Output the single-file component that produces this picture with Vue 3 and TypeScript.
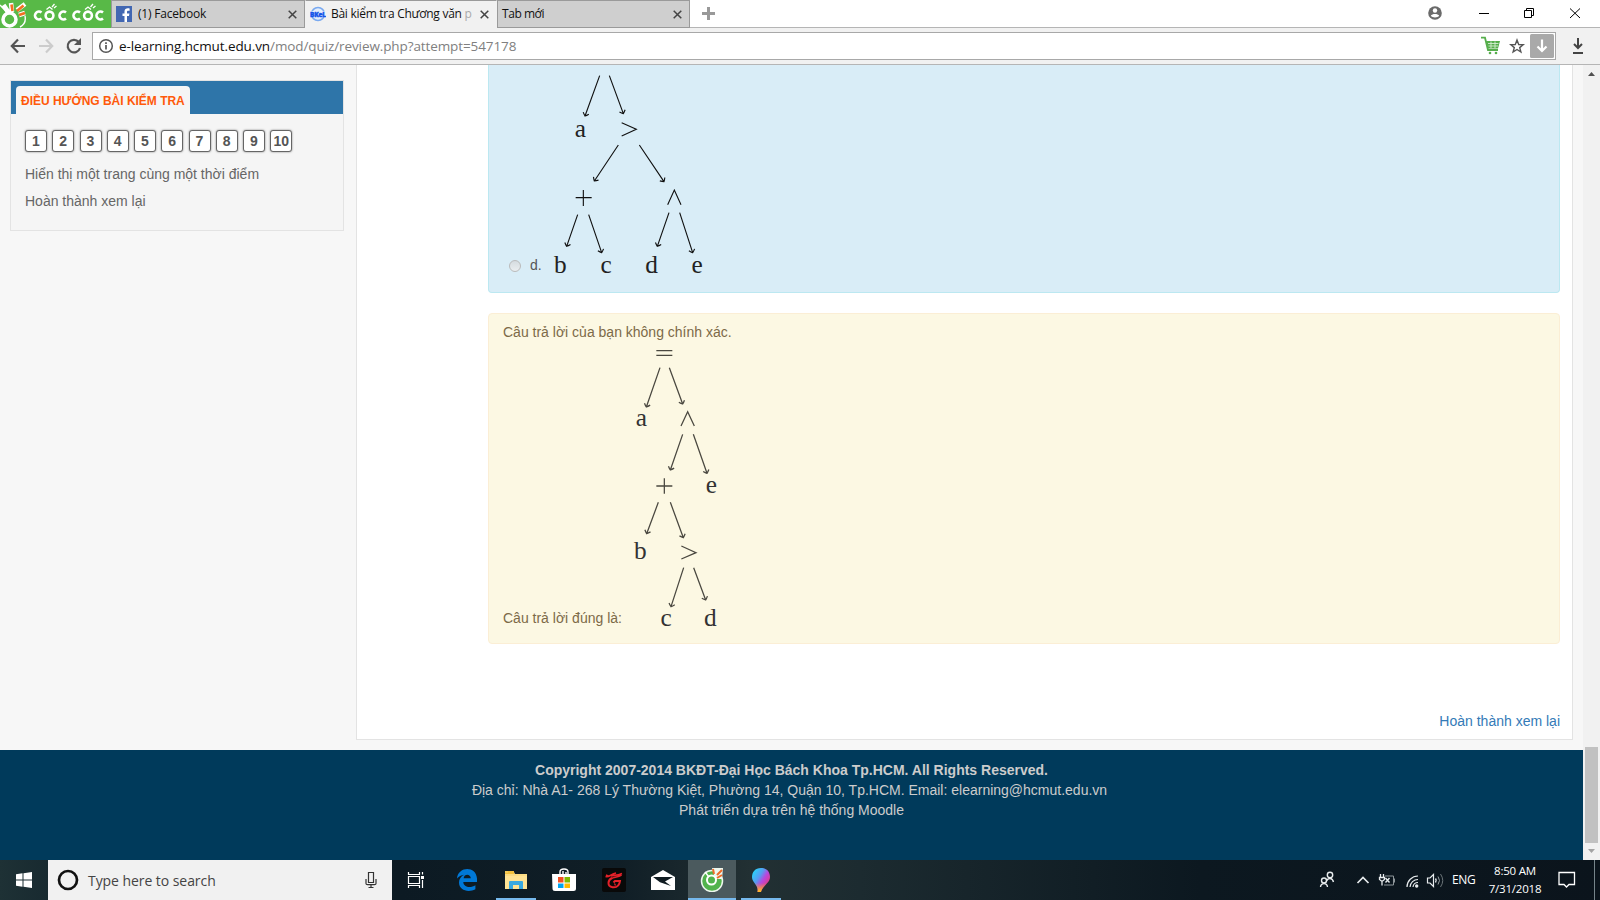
<script setup lang="ts">
type Arrow = [number, number, number, number]
interface Label { t: string; x: number; y: number }
interface Tree { box: string; w: number; h: number; arrows: Arrow[]; labels: Label[]; signs: string }

// Tree geometry is stored in thirds of a pixel.
const optionTree: Tree = {
  box: '210 15 480 645', w: 160, h: 215,
  arrows: [
    [359, 47, 315, 168], [388, 47, 430, 161], [415, 255, 343, 363], [478, 255, 552, 365],
    [293, 464, 260, 559], [326, 464, 365, 578], [567, 458, 532, 559], [599, 458, 638, 578],
  ],
  labels: [
    { t: 'a', x: 301, y: 230 }, { t: 'b', x: 241, y: 639 }, { t: 'c', x: 378, y: 639 },
    { t: 'd', x: 515, y: 639 }, { t: 'e', x: 651, y: 639 },
  ],
  signs: 'M425 188L469 208L425 228M287 413H335M310 390V438M563 434L583 390L603 434',
}
const answerTree: Tree = {
  box: '441 135 288 858', w: 96, h: 286,
  arrows: [
    [540, 203, 499, 321], [568, 203, 608, 312], [608, 403, 571, 510], [640, 403, 681, 520],
    [535, 607, 500, 701], [571, 607, 610, 713], [611, 803, 573, 920], [641, 803, 677, 900],
  ],
  labels: [
    { t: 'a', x: 484, y: 379 }, { t: 'e', x: 694, y: 579 }, { t: 'b', x: 481, y: 777 },
    { t: 'c', x: 558, y: 977 }, { t: 'd', x: 691, y: 977 },
  ],
  signs: 'M529 152H577M529 166H577M603 378L623 335L643 378M529 558H577M553 535V581M604 738L648 758L604 777',
}

function arrowPath([x1, y1, x2, y2]: Arrow): string {
  const a = Math.atan2(y2 - y1, x2 - x1)
  const pt = (back: number, side: number) =>
    `${(x2 - back * Math.cos(a) - side * Math.sin(a)).toFixed(1)} ${(y2 - back * Math.sin(a) + side * Math.cos(a)).toFixed(1)}`
  return `M${x1} ${y1}L${x2} ${y2}M${pt(9, 9)}Q${pt(3, 4)} ${x2} ${y2}Q${pt(3, -4)} ${pt(9, -9)}`
}
const pages = Array.from({ length: 10 }, (_, i) => i + 1)
</script>

<template>
  <div class="screen">
    <header class="tabs">
      <div class="brand">
        <svg width="111" height="28" viewBox="0 0 111 28">
          <path d="M0 5C3 8 5 10 7 13M20 27C24 25 26 21 25 16" stroke="#fff" stroke-width="1.4" fill="none" />
          <circle cx="9.500" cy="19.500" r="6.500" fill="none" stroke="#fff" stroke-width="3.500" />
          <path d="M3.500 5L9 13M11 3L12 12M17 10L25 4M19 15L25 13" stroke="#fff" stroke-width="4.500" />
          <path d="M11.500 4.500L12.500 11M17 11L23.500 5.500M19 15L25 13" stroke="#f37021" stroke-width="2.600" />
          <g fill="none" stroke="#fff" stroke-width="2.600">
            <path d="M41.500 12.400A4 4 0 1 0 41.500 18.600M66 12.400A4 4 0 1 0 66 18.600M80 12.400A4 4 0 1 0 80 18.600M103 12.400A4 4 0 1 0 103 18.600" />
            <circle cx="49.500" cy="15.500" r="3.900" /><circle cx="88" cy="15.500" r="3.900" />
          </g>
          <path d="M46.500 9.500L49.500 7L52.500 9.500M52 7L54.500 4M54 8L56.500 6M85 9.500L88 7L91 9.500M90.500 7L93 4M93 8L95.500 6" fill="none" stroke="#fff" stroke-width="1.300" />
        </svg>
      </div>
      <div class="tab">
        <svg width="16" height="16"><rect width="16" height="16" fill="#4267b2" /><path d="M11 16V10H13L13.400 7.600H11V6C11 5.200 11.300 4.700 12.400 4.700H13.600V2.500C11 2 8.500 2.500 8.500 5.500V7.600H6.500V10H8.500V16Z" fill="#fff" /></svg>
        <span class="t1">(1) Facebook</span>
        <svg class="x" width="9" height="9"><path d="M.7 .7L8.300 8.300M8.300 .7L.7 8.300" /></svg>
      </div>
      <div class="tab active">
        <svg width="16" height="16"><circle cx="8" cy="8" r="6.500" fill="#e4eefc" stroke="#79a9f0" stroke-width="1.500" /><rect y="5.200" width="16" height="5.800" fill="#e9f1fe" /><text x="0" y="10.500" textLength="16" lengthAdjust="spacingAndGlyphs" font-size="6.500" font-weight="900" fill="#1554e8" stroke="#1554e8" stroke-width=".4">BKeL</text></svg>
        <span class="t2">Bài kiểm tra Chương văn <i>p</i></span>
        <svg class="x" width="9" height="9"><path d="M.7 .7L8.300 8.300M8.300 .7L.7 8.300" /></svg>
      </div>
      <div class="tab third">
        <span class="t3">Tab mới</span>
        <svg class="x" width="9" height="9"><path d="M.7 .7L8.300 8.300M8.300 .7L.7 8.300" /></svg>
      </div>
      <svg class="plus" width="13" height="13"><path d="M6.500 0V13M0 6.500H13" stroke="#999" stroke-width="3" /></svg>
      <div class="grow"></div>
      <svg class="win" width="173" height="27" viewBox="0 0 173 27">
        <circle cx="8" cy="13" r="6.800" fill="#6a6a6a" /><circle cx="8" cy="10.500" r="2.200" fill="#fff" /><path d="M3.800 15.800C5 13.400 11 13.400 12.200 15.800C10.500 18 5.500 18 3.800 15.800Z" fill="#fff" />
        <g fill="none" stroke="#000"><path d="M52 13.500H62M97.500 10.500H104.500V17.500H97.500ZM99.500 10.500V8.500H106.500V15.500H104.500M143 8.500L153 18M153 8.500L143 18" /></g>
      </svg>
    </header>

    <div class="toolbar">
      <svg class="nav" width="92" height="36" viewBox="0 0 92 36">
        <path d="M25 18H12M18 11.500L11.800 18L18 24.500" fill="none" stroke="#555" stroke-width="2.200" />
        <path d="M39 18H52M46 11.500L52.200 18L46 24.500" fill="none" stroke="#ccc" stroke-width="2.200" />
        <path d="M78.800 14A6.300 6.300 0 1 0 80 20" fill="none" stroke="#555" stroke-width="2.200" /><path d="M81 10V17H74Z" fill="#555" />
      </svg>
      <div class="address">
        <svg width="16" height="16"><circle cx="8" cy="8" r="6.300" fill="none" stroke="#555" stroke-width="1.500" /><path d="M8 7V11.500M8 4.300V6" stroke="#555" stroke-width="1.700" /></svg>
        <span class="url"><b>e-learning.hcmut.edu.vn</b>/mod/quiz/review.php?attempt=547178</span>
        <span class="grow"></span>
        <svg width="74" height="26" viewBox="0 0 74 26">
          <path d="M0 4.700H4L7 17H17" fill="none" stroke="#56ae4c" stroke-width="1.800" /><path d="M5 8H19L17 15.500H7Z" fill="#56ae4c" /><path d="M7 10.500H17.500M7.500 13H17M10 8.500V15M14 8.500V15" stroke="#d5edd1" stroke-width=".9" /><circle cx="9" cy="20" r="1.300" fill="#56ae4c" /><circle cx="15" cy="20" r="1.300" fill="#56ae4c" />
          <path d="M36 7L37.700 11.500L42.200 11.700L38.700 14.600L39.900 19L36 16.500L32.100 19L33.300 14.600L29.800 11.700L34.300 11.500Z" fill="none" stroke="#555" stroke-width="1.400" />
          <rect x="49" y="1" width="24" height="24" rx="1.500" fill="#a9a9a9" /><path d="M61 6.500V18M56.500 13.500L61 18L65.500 13.500" fill="none" stroke="#fff" stroke-width="2.200" />
        </svg>
      </div>
      <svg class="dl" width="44" height="36"><path d="M22 10V20M18 16L22 20L26 16" fill="none" stroke="#444" stroke-width="2" /><path d="M17 25H27" stroke="#444" stroke-width="2" /></svg>
    </div>

    <div class="viewport">
      <div class="page">
        <div class="columns">
          <aside>
            <div class="block-head"><h2>ĐIỀU HƯỚNG BÀI KIỂM TRA</h2></div>
            <div class="block-body">
              <div class="pages"><button v-for="p in pages" :key="p">{{ p }}</button></div>
              <p>Hiển thị một trang cùng một thời điểm</p>
              <p>Hoàn thành xem lại</p>
            </div>
          </aside>
          <main>
            <section class="question">
              <i class="radio"></i><span class="letter">d.</span>
              <svg class="tree" :width="optionTree.w" :height="optionTree.h" :viewBox="optionTree.box">
                <path v-for="(a, i) in optionTree.arrows" :key="i" :d="arrowPath(a)" />
                <path :d="optionTree.signs" />
                <text v-for="l in optionTree.labels" :key="l.t" :x="l.x" :y="l.y">{{ l.t }}</text>
              </svg>
            </section>
            <section class="feedback">
              <p>Câu trả lời của bạn không chính xác.</p>
              <div class="right-answer">
                <span>Câu trả lời đúng là:</span>
                <svg class="tree soft" :width="answerTree.w" :height="answerTree.h" :viewBox="answerTree.box">
                  <path v-for="(a, i) in answerTree.arrows" :key="i" :d="arrowPath(a)" />
                  <path :d="answerTree.signs" />
                  <text v-for="l in answerTree.labels" :key="l.t" :x="l.x" :y="l.y">{{ l.t }}</text>
                </svg>
              </div>
            </section>
            <a class="finish">Hoàn thành xem lại</a>
          </main>
        </div>
        <footer>
          <strong>Copyright 2007-2014 BKĐT-Đại Học Bách Khoa Tp.HCM. All Rights Reserved.</strong>
          <span class="addr">Địa chỉ: Nhà A1- 268 Lý Thường Kiệt, Phường 14, Quận 10, Tp.HCM. Email: elearning@hcmut.edu.vn</span>
          <span>Phát triển dựa trên hệ thống Moodle</span>
        </footer>
      </div>
      <div class="scroll">
        <svg width="17" height="17"><path d="M5 11L8.500 7L12 11Z" fill="#505050" /></svg>
        <div class="thumb"></div>
        <svg width="17" height="17"><path d="M5 6L8.500 10L12 6Z" fill="#a3a3a3" /></svg>
      </div>
    </div>

    <div class="taskbar">
      <div class="cell start"><svg width="16" height="16"><path d="M0 2.200L6.500 1.300V7.500H0ZM7.500 1.200L16 0V7.500H7.500ZM0 8.500H6.500V14.700L0 13.800ZM7.500 8.500H16V16L7.500 14.800Z" fill="#fff" /></svg></div>
      <div class="search">
        <svg width="22" height="22"><circle cx="11" cy="11" r="9" fill="none" stroke="#111" stroke-width="2.700" /></svg>
        <span>Type here to search</span>
        <svg width="12" height="18"><path d="M3.500 1.500H8.500V11.500H3.500ZM1 8V12.500Q1 13.700 2.500 13.700H9.500Q11 13.700 11 12.500V8M6 14V16.500M3.500 16.500H8.500" fill="none" stroke="#333" stroke-width="1.200" /></svg>
      </div>
      <div class="cell"><svg width="18" height="18"><path d="M1.500 1V3.500H12.500V1M1.500 5.500H12.500V12.500H1.500ZM1.500 17V14.500H12.500V17M15.500 1V3.500M15.500 9V17" fill="none" stroke="#fff" stroke-width="1.200" /><rect x="14" y="5" width="3" height="3" fill="#fff" /></svg></div>
      <div class="cell edge"><svg width="22" height="22" viewBox="0 0 22 22"><path d="M1 9.500C2-2.500 20-3.500 21 9.500V13H7.300C7.500 18.600 14.800 19.300 19.400 16.300V20.300C12.500 24 3 21.500 3 13.600C3 10 5 7.200 8.200 5.700C5.200 6 2.500 7.500 1 9.500ZM7.600 9.200H14.800C14.600 4.700 8.200 4.400 7.600 9.200Z" fill="#0078d7" /></svg></div>
      <div class="cell explorer"><svg width="22" height="19"><path d="M0 1H9L10 3H22V18H0Z" fill="#ffe394" /><path d="M0 0H9V3H0Z" fill="#f3c13e" /><path d="M4 18V11Q4 10 5 10H17Q18 10 18 11V18H14V14H8V18Z" fill="#39a9e0" /><path d="M0 1H3M0 4H22" stroke="#f7d575" /></svg></div>
      <div class="cell"><svg width="24" height="24"><path d="M8 7V4Q8 1 12 1Q16 1 16 4V7M11 6V3M14 7V4" fill="none" stroke="#fff" stroke-width="1.400" /><path d="M0 6H24V20.500Q24 23 21.500 23H3Q.5 23 .5 20.500Z" fill="#fff" /><path d="M6 9H11.500V14.500H6Z" fill="#f25022" /><path d="M12.500 9H18V14.500H12.500Z" fill="#7fba00" /><path d="M6 15.500H11.500V20H6Z" fill="#00a4ef" /><path d="M12.500 15.500H18V20H12.500Z" fill="#ffb900" /></svg></div>
      <div class="cell garena"><svg width="24" height="24"><rect width="24" height="24" rx="2" fill="#090909" /><g fill="none" stroke="#e32129"><path d="M3.500 8.500C7 9.500 9 6 14 5M4 7L7 8.500M9 8C12 7 15 8 20 5.500M19.500 7C16 9.500 12 9 9.500 10.500" stroke-width="1.700" /><path d="M10 10C5.500 12 5 18.500 10.500 19.300C15 19.800 17.500 17 18 13H13L11.500 14.500" stroke-width="2" /><path d="M12.500 15.500L13.500 17.500" stroke-width="1.300" /></g></svg></div>
      <div class="cell mail"><svg width="24" height="20"><path d="M0 7L12 0L24 7V20H0Z" fill="#fff" /><path d="M2 7H22L14 11.500L20 16L9 12.200Z" fill="#101c22" /></svg></div>
      <div class="cell chosen"><svg width="24" height="24"><circle cx="12" cy="13" r="10.500" fill="#52b34c" stroke="#eef7ee" stroke-width="1.500" /><path d="M12 0H23L22 11H15Z" fill="#eef7ee" /><circle cx="11.500" cy="12" r="4.500" fill="#52b34c" stroke="#fff" stroke-width="2" /><path d="M13 1L14 6M22 2L17 7M22 7L17 10" stroke="#ef6b28" stroke-width="2" /><path d="M5 4L9 9" stroke="#fff" stroke-width="1.500" /></svg></div>
      <div class="cell paint">
        <svg width="20" height="24">
          <defs><linearGradient id="drop" x1=".15" y1=".15" x2=".85" y2=".75"><stop offset="0" stop-color="#31c9f6" /><stop offset=".36" stop-color="#589af1" /><stop offset=".62" stop-color="#b747df" /><stop offset="1" stop-color="#e33a84" /></linearGradient><linearGradient id="tip" x1="0" y1="0" x2="0" y2="1"><stop offset=".62" stop-color="#f6a323" stop-opacity="0" /><stop offset=".95" stop-color="#ffb52b" /></linearGradient></defs>
          <path d="M10 0C16 0 19 4 19 9C19 15 12 17 10 24H6.500C8 17 1 15 1 9C1 4 4 0 10 0Z" fill="url(#drop)" /><path d="M10 0C16 0 19 4 19 9C19 15 12 17 10 24H6.500C8 17 1 15 1 9C1 4 4 0 10 0Z" fill="url(#tip)" />
        </svg>
      </div>
      <div class="grow"></div>
      <svg class="tray" width="130" height="40" viewBox="1315 0 130 40">
        <g fill="none" stroke="#e8ecee" stroke-width="1.400">
          <circle cx="1330" cy="15" r="2.700" /><path d="M1326.500 21C1328 17.500 1332.500 17.500 1333.500 22" /><circle cx="1324" cy="20.500" r="2.500" /><path d="M1320.500 27C1321 22.500 1327 22.500 1327.500 27" />
          <path d="M1357.500 23L1363 17.500L1368.500 23" stroke-width="1.700" />
          <path d="M1380.500 14V17M1383.500 14V17M1379.500 17.500H1384.500V19.500L1382 21.500L1379.500 19.500ZM1382 21V25.500" stroke-width="1.300" />
          <path d="M1385 16H1393.500V25H1384M1394.500 18.500V22.500" stroke="#8d9599" stroke-width="1" /><path d="M1385.500 18L1389.500 22.500M1389.500 18L1385.500 22.500" />
          <path d="M1407 27A11 11 0 0 1 1418 16M1410 27A8 8 0 0 1 1418 19.500M1413 27A5 5 0 0 1 1418 22.500" stroke-width="1.200" /><circle cx="1416.700" cy="26" r="1" fill="#fff" />
          <path d="M1427.500 18H1430L1433.500 14.500V26.500L1430 23H1427.500Z" stroke-width="1.200" /><path d="M1435.500 18.500Q1437 20.500 1435.500 22.500" /><path d="M1438 16.500Q1441 20.500 1438 24.500" stroke="#9aa1a4" stroke-width="1" /><path d="M1440.500 14Q1445 20.500 1440.500 27" stroke="#6c7579" stroke-width="1" />
        </g>
      </svg>
      <span class="lang">ENG</span>
      <div class="clock"><span>8:50 AM</span><span>7/31/2018</span></div>
      <svg class="notes" width="18" height="18"><path d="M1 1.500H16.500V13.500H11L8.500 16L6 13.500H1Z" fill="none" stroke="#fff" stroke-width="1.300" /></svg>
      <div class="peek"></div>
    </div>
  </div>
</template>

<style>
body { margin: 0; }
</style>
<style scoped>
* { box-sizing: border-box; }
svg { display: block; flex: none; }
p, h2 { margin: 0; }
.grow { flex: 1; }
.screen { width: 1600px; height: 900px; overflow: hidden; display: flex; flex-direction: column; background: #fff; font-family: "Liberation Sans", sans-serif; font-size: 14px; white-space: nowrap; }
.tabs { height: 28px; display: flex; background: #fff; border-bottom: 1px solid #b5b5b5; font: 12px "Open Sans", "Noto Sans", sans-serif; color: #111; flex: none; }
.brand { width: 111px; height: 28px; background: #58b947; overflow: hidden; }
.tab { width: 194px; height: 28px; border: 1px solid #9a9a9a; background: #cfcfcf; display: flex; align-items: center; padding: 0 7px 0 4px; flex: none; letter-spacing: -.2px; }
.tab > span { flex: 1; margin-left: 6px; margin-top: -1px; }
.tab.active { width: 192px; background: #f1f1f1; border-color: #f1f1f1; border-top-color: #9a9a9a; }
.tab .t2 { margin-left: 5px; letter-spacing: -.28px; }
.t2 i { font-style: normal; color: #aaa; }
.tab.third { width: 193px; }
.tab .t3 { margin-left: 0; letter-spacing: -.45px; }
.x { fill: none; stroke: #444; stroke-width: 1.5; }
.plus { margin: 7px 0 0 12px; }
.toolbar { height: 37px; flex: none; background: #f1f1f1; border-bottom: 1px solid #b5b5b5; display: flex; }
.address { width: 1464px; height: 28px; margin-top: 4px; border: 1px solid #a8a8a8; background: #fff; display: flex; align-items: center; padding-left: 5px; }
.url { margin-left: 5px; font: 13.5px "Open Sans", "Noto Sans", sans-serif; letter-spacing: -.1px; color: #808080; }
.url b { font-weight: 400; color: #111; }
.viewport { height: 795px; display: flex; flex: none; }
.page { width: 1583px; background: #f7f7f7; display: flex; flex-direction: column; }
.columns { height: 685px; display: flex; align-items: flex-start; }
aside { width: 334px; height: 151px; margin: 15px 12px 0 10px; border: 1px solid #e3e3e3; background: #f5f5f5; flex: none; }
.block-head { background: #2e75a9; height: 33px; padding: 5px 0 0 5px; display: flex; }
h2 { height: 28px; width: 174px; padding-left: 5px; line-height: 30px; border-radius: 4px 4px 0 0; background: #f5f5f5; color: #ff5a0a; font-size: 12px; letter-spacing: -.02px; }
.block-body { padding: 16px 14px; color: #666; }
.pages { display: flex; gap: 5.25px; height: 23px; }
button { width: 22px; height: 22px; padding: 0; border: 1px solid #666; border-radius: 3px; background: #fff; box-shadow: 0 0 2px #777; color: #555; font: bold 14px "Liberation Sans", sans-serif; }
.block-body p { line-height: 27px; }
.block-body .pages + p { margin-top: 8px; }
main { width: 1217px; height: 675px; border: 1px solid #e3e3e3; border-top: 0; background: #fff; padding: 0 12px 0 131px; display: flex; flex-direction: column; }
.question { height: 228px; border: 1px solid #bce8f1; border-top: 0; border-radius: 0 0 4px 4px; background: #d9edf7; display: flex; align-items: flex-end; flex: none; }
.radio { width: 12px; height: 12px; border: 1px solid #bbb; border-radius: 50%; background: linear-gradient(#d5dce0, #eaeef0); margin: 0 9px 20px 20px; }
.letter { color: #555; line-height: 16px; margin-bottom: 19px; width: 20px; }
.tree { margin-bottom: 12px; }
.tree path { fill: none; stroke: #111; stroke-width: 3.4; }
.tree text { font-family: "Liberation Serif", serif; font-size: 76px; fill: #222; text-anchor: middle; }
.tree.soft path { stroke: #4a4840; stroke-width: 3.8; }
.tree.soft text { fill: #333; }
.feedback { margin-top: 20px; height: 331px; border: 1px solid #fbeed5; border-radius: 4px; background: #fcf8e3; color: #7d6a48; padding: 7px 14px; flex: none; }
.feedback p { line-height: 22px; }
.right-answer { display: flex; align-items: flex-end; margin-top: 2px; }
.right-answer span { width: 124px; line-height: 20px; margin-bottom: 15px; }
.finish { color: #337ab7; align-self: flex-end; margin-top: 68px; line-height: 18px; }
footer { height: 110px; background: #003a5b; color: #ccc; display: flex; flex-direction: column; align-items: center; padding-top: 10px; line-height: 20px; }
.addr { margin-right: 4px; }
.scroll { width: 17px; background: #f1f1f1; display: flex; flex-direction: column; align-items: center; }
.thumb { width: 13px; height: 96px; margin-top: 665px; background: #c1c1c1; }
.taskbar { height: 40px; flex: none; display: flex; align-items: stretch; background: linear-gradient(90deg, #1e3135 0, #182a30 48px, #0c1a23 400px, #101e26 620px, #223033 750px, #1c2b30 860px, #0c1820 1200px, #0b141c 1600px); color: #fff; font-family: "Open Sans", "Noto Sans", sans-serif; }
.cell { width: 48px; display: flex; align-items: center; justify-content: center; flex: none; border-bottom: 2px solid transparent; padding-top: 2px; }
.search { width: 344px; background: #f1f1f1; color: #444; display: flex; align-items: center; font-size: 14px; letter-spacing: -.06px; padding: 0 15px 0 9px; flex: none; }
.search span { flex: 1; margin-left: 9px; }
.edge { width: 54px; }
.explorer { width: 40px; margin-left: 2px; border-bottom-color: #76b9ed; }
.explorer + .cell { margin-left: 4px; }
.garena { margin-left: 2px; }
.mail { width: 49px; }
.chosen { background: #4b5a5e; border-bottom-color: #76b9ed; margin-left: 1px; }
.paint { width: 40px; margin-left: 5px; border-bottom-color: #76b9ed; }
.lang { font-size: 12px; letter-spacing: -.3px; line-height: 39px; width: 37px; padding-left: 7px; }
.clock { width: 76px; display: flex; flex-direction: column; align-items: center; line-height: 18px; font-size: 11.5px; letter-spacing: -.2px; padding: 2px 10px 2px 0; }
.notes { margin: 11px 0 0 0; }
.peek { width: 1px; background: #76848a; margin: 0 5px 0 18px; }
</style>
